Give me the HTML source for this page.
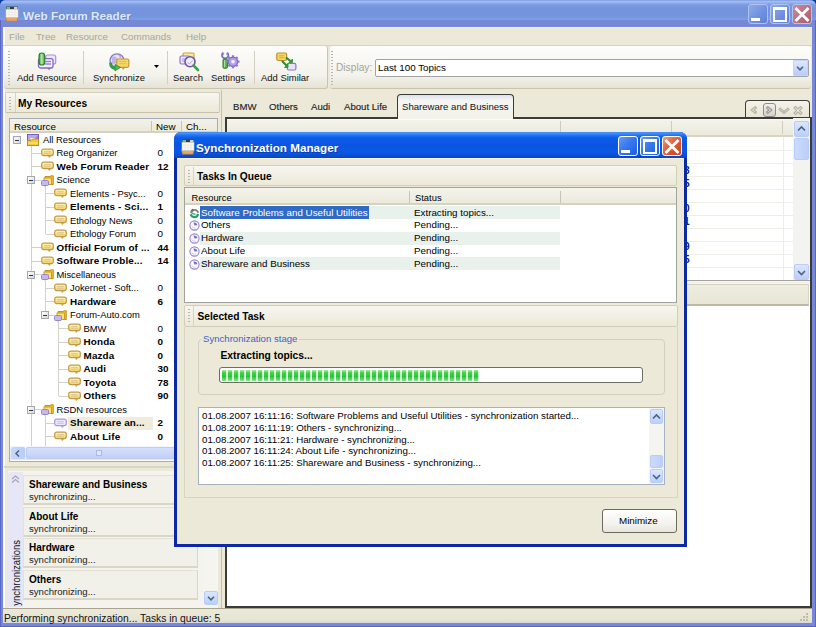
<!DOCTYPE html>
<html><head><meta charset="utf-8"><style>
*{box-sizing:border-box;margin:0;padding:0}
html,body{width:816px;height:627px;overflow:hidden;background:#0B3CA0;font-family:"Liberation Sans",sans-serif;font-size:9.7px;color:#000}
.a{position:absolute}
.t{position:absolute;white-space:nowrap;line-height:12px}
.b{font-weight:bold}
svg{position:absolute;overflow:visible}
</style></head><body>
<div class="a" style="left:0px;top:0px;width:816px;height:627px;background:#7A96DF;border-radius:6px 6px 0 0"></div>
<div class="a" style="left:0px;top:0px;width:816px;height:27px;border-radius:6px 6px 0 0;background:linear-gradient(#7090DA 0,#A2BCF4 1px,#9AB4F0 2.5px,#7E9CE2 4.5px,#7594DE 8px,#7594DE 16px,#7AA0E6 20px,#7AA0E6 24px,#6888D4 26px,#6484D0 27px)"></div>
<div class="a" style="left:0px;top:20px;width:816px;height:607px;background:#7688D6;border:1.5px solid #5A66C6;border-top:none"></div>
<div class="a" style="left:3px;top:27px;width:809px;height:596px;background:#ECE9D8"></div>
<div class="a" style="left:3px;top:28px;width:2px;height:595px;background:#FAFBF8"></div>
<svg style="left:5px;top:6px" width="14" height="16" viewBox="0 0 14 16"><path d="M0.5 11H13L12 15.2H1.5Z" fill="#E4A868" stroke="#B87838" stroke-width="0.7"/><rect x="1" y="2.8" width="12" height="8.6" fill="#FAFAF6" stroke="#D0C8C0" stroke-width="0.6"/><path d="M4 3.5V11M7 3.5V11M10 3.5V11M1.5 6.2H12.5M1.5 8.8H12.5" stroke="#E4E0DC" stroke-width="0.6"/><path d="M1 0.6H13V3.2H1Z" fill="#30403C"/><path d="M1.5 1H5V3H1.5Z" fill="#6CB898"/><path d="M9 1H12.5V3H9Z" fill="#D8D4BC"/></svg>
<div class="t b" style="left:23px;top:9.5px;font-size:11.8px;color:#DDE7FA;text-shadow:1px 1px 0 #6A84C8">Web Forum Reader</div>
<div class="a" style="left:748px;top:4px;width:20px;height:20px;border:1px solid #AFC3F2;border-radius:3px;background:linear-gradient(135deg,#8EAAEA 0%,#6E8FE0 60%,#5F80D8 100%)">
<div class="a" style="left:2px;top:13px;width:9px;height:3px;background:#fff"></div>
</div>
<div class="a" style="left:770px;top:4px;width:20px;height:20px;border:1px solid #AFC3F2;border-radius:3px;background:linear-gradient(135deg,#8EAAEA 0%,#6E8FE0 60%,#5F80D8 100%)">
<div class="a" style="left:2px;top:2px;width:14px;height:15px;border:2px solid #fff;border-top-width:3px"></div>
</div>
<div class="a" style="left:792px;top:4px;width:20px;height:20px;border:1px solid #AFC3F2;border-radius:3px;background:linear-gradient(135deg,#C9899A 0%,#B86E80 60%,#A85E72 100%)">
<svg style="left:0;top:0" width="18" height="18"><path d="M2.5 3L15.5 16M15.5 3L2.5 16" stroke="#fff" stroke-width="2.8"/></svg>
</div>
<div class="t " style="left:9px;top:31px;color:#A8A69A;font-size:9.8px">File</div>
<div class="t " style="left:36px;top:31px;color:#A8A69A;font-size:9.8px">Tree</div>
<div class="t " style="left:66px;top:31px;color:#A8A69A;font-size:9.8px">Resource</div>
<div class="t " style="left:121px;top:31px;color:#A8A69A;font-size:9.8px">Commands</div>
<div class="t " style="left:186px;top:31px;color:#A8A69A;font-size:9.8px">Help</div>
<div class="a" style="left:3px;top:27px;width:809px;height:1px;background:#F4F2EA"></div>
<div class="a" style="left:3px;top:45px;width:809px;height:1px;background:#D8D4C0"></div>
<div class="a" style="left:4px;top:46px;width:324px;height:43px;background:linear-gradient(#FDFDFB,#F3F2EC 70%,#E6E3D4);border-radius:3px;border-bottom:1px solid #C8C4B0;border-right:1px solid #C8C4B0"></div>
<div class="a" style="left:330px;top:46px;width:481px;height:43px;background:linear-gradient(#FDFDFB,#F3F2EC 70%,#E6E3D4);border-radius:3px;border-bottom:1px solid #C8C4B0"></div>
<div class="a" style="left:8px;top:51px;width:2px;height:34px;background:repeating-linear-gradient(#B8B6AC 0 1px,transparent 1px 3px)"></div>
<div class="a" style="left:331px;top:51px;width:2px;height:34px;background:repeating-linear-gradient(#B8B6AC 0 1px,transparent 1px 3px)"></div>
<div class="a" style="left:83px;top:51px;width:1px;height:33px;background:#D4D0C0"></div>
<div class="a" style="left:167px;top:51px;width:1px;height:33px;background:#D4D0C0"></div>
<div class="a" style="left:254px;top:51px;width:1px;height:33px;background:#D4D0C0"></div>
<div class="t " style="left:17px;top:72px;font-size:9.45px;color:#111">Add Resource</div>
<div class="t " style="left:93px;top:72px;font-size:9.45px;color:#111">Synchronize</div>
<div class="t " style="left:173px;top:72px;font-size:9.45px;color:#111">Search</div>
<div class="t " style="left:211px;top:72px;font-size:9.45px;color:#111">Settings</div>
<div class="t " style="left:261px;top:72px;font-size:9.45px;color:#111">Add Similar</div>
<svg style="left:154px;top:65px" width="6" height="4"><path d="M0 0H5L2.5 3Z" fill="#000"/></svg>
<div class="t " style="left:336px;top:62px;color:#A6A498;font-size:10.2px">Display:</div>
<div class="a" style="left:375px;top:59px;width:434px;height:18px;background:#fff;border:1px solid #A2A4A2;border-radius:2px"></div>
<div class="t " style="left:378px;top:62px;font-size:9.8px">Last 100 Topics</div>
<div class="a" style="left:793px;top:60px;width:15px;height:16px;background:linear-gradient(#DDE8FE,#B9CDFA);border:1px solid #C4D4F6;border-radius:1px"></div>
<svg style="left:795.5px;top:66px" width="8" height="5"><path d="M1 0.8L4 3.8L7 0.8" stroke="#4D6185" stroke-width="1.6" fill="none"/></svg>
<svg style="left:36px;top:50px" width="22" height="22" viewBox="0 0 22 22"><defs><linearGradient id="gp" x1="0" y1="0" x2="1" y2="0"><stop offset="0" stop-color="#3C9840"/><stop offset="0.45" stop-color="#B4E8A4"/><stop offset="1" stop-color="#48A848"/></linearGradient></defs><rect x="9.7" y="5" width="10" height="9" rx="2" fill="#ECE6FA" stroke="#A894D8" stroke-width="1.2"/><path d="M11.5 17.5L13 20.5L14.8 17.5Z" fill="#8468C0"/><rect x="2.5" y="8.7" width="14.5" height="9.3" rx="2" fill="#F6F2FE" stroke="#8468C0" stroke-width="1.3"/><path d="M9 11.5H15M9 14H15" stroke="#9A80D8" stroke-width="1.4"/><rect x="3" y="3" width="5.7" height="12" rx="2.8" fill="url(#gp)" stroke="#2C7A30" stroke-width="1.1"/></svg><svg style="left:106px;top:50px" width="24" height="22" viewBox="0 0 24 22"><circle cx="11" cy="10.7" r="6.9" fill="#E8E4F8" stroke="#8878C0" stroke-width="1.3"/><path d="M6 7Q9 5 11 8Q13 10 10 13Q8 15 6 13Z" fill="#C0B4E8"/><path d="M12.5 5Q15 6 14 8" stroke="#B0A0E0" stroke-width="1.2" fill="none"/><path d="M19 17.5L17 20L16 17.5Z" fill="#C09838"/><rect x="10.8" y="9" width="12" height="8.3" rx="1.5" fill="#F8D868" stroke="#C09838" stroke-width="1.2"/><path d="M13 11.5H20.5M13 13.7H20.5" stroke="#E8B840" stroke-width="1"/><path d="M4.6 12.5Q4.5 18.5 10 18.5" stroke="#30A040" stroke-width="3" fill="none"/><path d="M9 14.5L14.5 17.5L9 20.8Z" fill="#48C050" stroke="#208830" stroke-width="0.8"/></svg><svg style="left:177px;top:50px" width="24" height="22" viewBox="0 0 24 22"><rect x="6" y="3" width="11" height="7" rx="1" fill="#FCE8A0" stroke="#D0A030" stroke-width="1.1"/><rect x="3" y="6" width="10" height="8" rx="1.5" fill="#ECE6FA" stroke="#9078C8" stroke-width="1.2"/><path d="M5 9H9M5 11H8" stroke="#A894D8" stroke-width="1"/><circle cx="13" cy="11.7" r="5" fill="#F0ECFC" stroke="#6858A8" stroke-width="1.6"/><path d="M10.5 12.5L12.5 14L15.5 10.5" stroke="#B8A8E0" stroke-width="1" fill="none"/><path d="M16.5 15.5L21 20" stroke="#40A048" stroke-width="2.6" stroke-linecap="round"/></svg><svg style="left:219px;top:50px" width="22" height="22" viewBox="0 0 22 22"><path d="M4.2 2.8A3.2 3.2 0 1 0 8.2 2.8" stroke="#7A70B4" stroke-width="1.8" fill="none"/><path d="M4.6 2.5V5.2M7.8 2.5V5.2" stroke="#9C94CC" stroke-width="1"/><rect x="4" y="9.2" width="4.4" height="9" rx="0.8" fill="#58B848" stroke="#2C7A30" stroke-width="1"/><path d="M5.6 10.2V17.2" stroke="#B0E8A0" stroke-width="1"/><circle cx="14" cy="11.7" r="4.6" fill="#B4A0E8" stroke="#7A60C0" stroke-width="1.2"/><g stroke="#9078D0" stroke-width="2.2"><path d="M14 5.2V7.2M14 16.2V18.2M7.5 11.7H9.5M18.5 11.7H20.5M9.4 7.1L10.8 8.5M17.2 14.9L18.6 16.3M9.4 16.3L10.8 14.9M17.2 8.5L18.6 7.1"/></g><circle cx="14" cy="11.7" r="1.8" fill="#F4F0FF"/></svg><svg style="left:275px;top:50px" width="24" height="22" viewBox="0 0 24 22"><rect x="1.8" y="3" width="9.8" height="7.5" rx="1.5" fill="#F8D860" stroke="#B89030" stroke-width="1.2"/><path d="M4 5.8H9.5M4 7.8H9.5" stroke="#D0A848" stroke-width="1"/><rect x="12.3" y="13.4" width="8.6" height="6.6" rx="1.5" fill="#E8E2FA" stroke="#8C78C8" stroke-width="1.2"/><path d="M7 11L11.5 15.5M11 7.5L15.5 11" stroke="#2C8A30" stroke-width="2"/><path d="M9.5 17.5L13 17.5L13 13.5Z M14 12.5L17.5 12.5L17.5 9Z" fill="#30A038" stroke="#2C8A30" stroke-width="0.8"/></svg>
<div class="a" style="left:5px;top:92px;width:215px;height:21px;background:linear-gradient(#F7F6F0,#ECE9D8);border:1px solid #D2CEBC;border-bottom-color:#C4C0AC;border-radius:2px"></div>
<div class="a" style="left:9px;top:97px;width:2px;height:13px;background:repeating-linear-gradient(#B8B6AC 0 1px,transparent 1px 3px)"></div>
<div class="a" style="left:15px;top:93px;width:1px;height:19px;background:#D8D4C4"></div>
<div class="t b" style="left:18px;top:97.5px;font-size:10.2px">My Resources</div>
<div class="a" style="left:221px;top:90px;width:1px;height:518px;background:#C4C0AC"></div>
<div class="a" style="left:9px;top:118px;width:209px;height:344px;background:#fff;border:1px solid #A5ACB5"></div>
<div class="a" style="left:10px;top:119px;width:207px;height:14px;background:linear-gradient(#F3F2EA,#EBEADB);border-bottom:2px solid #D6D2C2"></div>
<div class="a" style="left:151px;top:121px;width:1px;height:10px;background:#C8C4B4"></div>
<div class="a" style="left:181px;top:121px;width:1px;height:10px;background:#C8C4B4"></div>
<div class="t " style="left:14px;top:121px;font-size:9.8px">Resource</div>
<div class="t " style="left:156px;top:121px;font-size:9.8px">New</div>
<div class="t " style="left:186px;top:121px;font-size:9.8px">Ch...</div>
<div class="a" style="left:31px;top:145.7px;width:1px;height:300.3px;background:#D2D2CA"></div>
<div class="a" style="left:45px;top:186.2px;width:1px;height:48.0px;background:#D2D2CA"></div>
<div class="a" style="left:45px;top:280.7px;width:1px;height:34.5px;background:#D2D2CA"></div>
<div class="a" style="left:58px;top:321.2px;width:1px;height:75.0px;background:#D2D2CA"></div>
<div class="a" style="left:45px;top:415.7px;width:1px;height:30.30000000000001px;background:#D2D2CA"></div>
<div class="a" style="left:13px;top:136px;width:8px;height:8px;border:1px solid #A0A8B4;background:linear-gradient(135deg,#fff,#D8D8D0);"><div class="a" style="left:1px;top:2.5px;width:4px;height:1.3px;background:#303848"></div></div>
<svg style="left:27.0px;top:134.2px" width="12" height="12" viewBox="0 0 12 12"><rect x="0.5" y="0.5" width="11" height="11" fill="#9C88D8" stroke="#7860B8" stroke-width="1"/><path d="M1 1H11L6 6L1 11Z" fill="#B8A8EC"/><path d="M3 4H8V7L5 7Z" fill="#F4F0FF"/><path d="M0.5 6.5H4L5.5 5H11.5V11.5H0.5Z" fill="#F6C838" stroke="#C09010" stroke-width="0.9"/><path d="M1 9H11" stroke="#FFE890" stroke-width="1"/></svg>
<div class="t " style="left:43.0px;top:133.7px;font-size:9.4px">All Resources</div>
<div class="a" style="left:32px;top:153px;width:9px;height:1px;background:#D2D2CA"></div>
<svg style="left:40.6px;top:147.7px" width="13" height="11" viewBox="0 0 13 11"><defs><linearGradient id="gy" x1="0" y1="0" x2="0" y2="1"><stop offset="0" stop-color="#FFF6C0"/><stop offset="1" stop-color="#F4D060"/></linearGradient></defs><path d="M7 7.2L8.3 9.6L10 7.2Z" fill="#E0B040" stroke="#B88C30" stroke-width="0.6"/><rect x="0.7" y="1.2" width="11.6" height="6.4" rx="2" fill="url(#gy)" stroke="#C09A48" stroke-width="1.2"/><path d="M3.2 3.6H9.8M3.2 5.3H9.8" stroke="#D8C48C" stroke-width="0.9"/></svg>
<div class="t " style="left:56.5px;top:147.2px;font-size:9.4px">Reg Organizer</div>
<div class="t " style="left:157.5px;top:147.2px;font-size:9.9px">0</div>
<div class="a" style="left:32px;top:166px;width:9px;height:1px;background:#D2D2CA"></div>
<svg style="left:40.6px;top:161.2px" width="13" height="11" viewBox="0 0 13 11"><defs><linearGradient id="gy" x1="0" y1="0" x2="0" y2="1"><stop offset="0" stop-color="#FFF6C0"/><stop offset="1" stop-color="#F4D060"/></linearGradient></defs><path d="M7 7.2L8.3 9.6L10 7.2Z" fill="#E0B040" stroke="#B88C30" stroke-width="0.6"/><rect x="0.7" y="1.2" width="11.6" height="6.4" rx="2" fill="url(#gy)" stroke="#C09A48" stroke-width="1.2"/><path d="M3.2 3.6H9.8M3.2 5.3H9.8" stroke="#D8C48C" stroke-width="0.9"/></svg>
<div class="t b" style="left:56.5px;top:160.7px;font-size:9.9px;letter-spacing:0.15px">Web Forum Reader</div>
<div class="t b" style="left:157.5px;top:160.7px;font-size:9.9px">12</div>
<div class="a" style="left:32px;top:180px;width:9px;height:1px;background:#D2D2CA"></div>
<div class="a" style="left:27px;top:176px;width:8px;height:8px;border:1px solid #A0A8B4;background:linear-gradient(135deg,#fff,#D8D8D0);"><div class="a" style="left:1px;top:2.5px;width:4px;height:1.3px;background:#303848"></div></div>
<svg style="left:40.6px;top:174.7px" width="13" height="12" viewBox="0 0 13 12"><path d="M4 1.5H9L10 0.8H12.3V9.5H4Z" fill="#F0C030" stroke="#C08A10" stroke-width="0.9"/><rect x="3" y="3" width="7.5" height="6.5" fill="#FCE078" stroke="#C89820" stroke-width="0.9"/><rect x="0.5" y="5.5" width="7" height="5" rx="1" fill="#C4B8EC" stroke="#9080C0" stroke-width="0.9"/><path d="M3 10.5L4 11.8L5 10.5" fill="#9080C0"/></svg>
<div class="t " style="left:56.5px;top:174.2px;font-size:9.4px">Science</div>
<div class="a" style="left:46px;top:193px;width:8px;height:1px;background:#D2D2CA"></div>
<svg style="left:54.2px;top:188.2px" width="13" height="11" viewBox="0 0 13 11"><defs><linearGradient id="gy" x1="0" y1="0" x2="0" y2="1"><stop offset="0" stop-color="#FFF6C0"/><stop offset="1" stop-color="#F4D060"/></linearGradient></defs><path d="M7 7.2L8.3 9.6L10 7.2Z" fill="#E0B040" stroke="#B88C30" stroke-width="0.6"/><rect x="0.7" y="1.2" width="11.6" height="6.4" rx="2" fill="url(#gy)" stroke="#C09A48" stroke-width="1.2"/><path d="M3.2 3.6H9.8M3.2 5.3H9.8" stroke="#D8C48C" stroke-width="0.9"/></svg>
<div class="t " style="left:70.0px;top:187.7px;font-size:9.4px">Elements - Psyc...</div>
<div class="t " style="left:157.5px;top:187.7px;font-size:9.9px">0</div>
<div class="a" style="left:46px;top:207px;width:8px;height:1px;background:#D2D2CA"></div>
<svg style="left:54.2px;top:201.7px" width="13" height="11" viewBox="0 0 13 11"><defs><linearGradient id="gy" x1="0" y1="0" x2="0" y2="1"><stop offset="0" stop-color="#FFF6C0"/><stop offset="1" stop-color="#F4D060"/></linearGradient></defs><path d="M7 7.2L8.3 9.6L10 7.2Z" fill="#E0B040" stroke="#B88C30" stroke-width="0.6"/><rect x="0.7" y="1.2" width="11.6" height="6.4" rx="2" fill="url(#gy)" stroke="#C09A48" stroke-width="1.2"/><path d="M3.2 3.6H9.8M3.2 5.3H9.8" stroke="#D8C48C" stroke-width="0.9"/></svg>
<div class="t b" style="left:70.0px;top:201.2px;font-size:9.9px;letter-spacing:0.15px">Elements - Sci...</div>
<div class="t b" style="left:157.5px;top:201.2px;font-size:9.9px">1</div>
<div class="a" style="left:46px;top:220px;width:8px;height:1px;background:#D2D2CA"></div>
<svg style="left:54.2px;top:215.2px" width="13" height="11" viewBox="0 0 13 11"><defs><linearGradient id="gy" x1="0" y1="0" x2="0" y2="1"><stop offset="0" stop-color="#FFF6C0"/><stop offset="1" stop-color="#F4D060"/></linearGradient></defs><path d="M7 7.2L8.3 9.6L10 7.2Z" fill="#E0B040" stroke="#B88C30" stroke-width="0.6"/><rect x="0.7" y="1.2" width="11.6" height="6.4" rx="2" fill="url(#gy)" stroke="#C09A48" stroke-width="1.2"/><path d="M3.2 3.6H9.8M3.2 5.3H9.8" stroke="#D8C48C" stroke-width="0.9"/></svg>
<div class="t " style="left:70.0px;top:214.7px;font-size:9.4px">Ethology News</div>
<div class="t " style="left:157.5px;top:214.7px;font-size:9.9px">0</div>
<div class="a" style="left:46px;top:234px;width:8px;height:1px;background:#D2D2CA"></div>
<svg style="left:54.2px;top:228.7px" width="13" height="11" viewBox="0 0 13 11"><defs><linearGradient id="gy" x1="0" y1="0" x2="0" y2="1"><stop offset="0" stop-color="#FFF6C0"/><stop offset="1" stop-color="#F4D060"/></linearGradient></defs><path d="M7 7.2L8.3 9.6L10 7.2Z" fill="#E0B040" stroke="#B88C30" stroke-width="0.6"/><rect x="0.7" y="1.2" width="11.6" height="6.4" rx="2" fill="url(#gy)" stroke="#C09A48" stroke-width="1.2"/><path d="M3.2 3.6H9.8M3.2 5.3H9.8" stroke="#D8C48C" stroke-width="0.9"/></svg>
<div class="t " style="left:70.0px;top:228.2px;font-size:9.4px">Ethology Forum</div>
<div class="t " style="left:157.5px;top:228.2px;font-size:9.9px">0</div>
<div class="a" style="left:32px;top:247px;width:9px;height:1px;background:#D2D2CA"></div>
<svg style="left:40.6px;top:242.2px" width="13" height="11" viewBox="0 0 13 11"><defs><linearGradient id="gy" x1="0" y1="0" x2="0" y2="1"><stop offset="0" stop-color="#FFF6C0"/><stop offset="1" stop-color="#F4D060"/></linearGradient></defs><path d="M7 7.2L8.3 9.6L10 7.2Z" fill="#E0B040" stroke="#B88C30" stroke-width="0.6"/><rect x="0.7" y="1.2" width="11.6" height="6.4" rx="2" fill="url(#gy)" stroke="#C09A48" stroke-width="1.2"/><path d="M3.2 3.6H9.8M3.2 5.3H9.8" stroke="#D8C48C" stroke-width="0.9"/></svg>
<div class="t b" style="left:56.5px;top:241.7px;font-size:9.9px;letter-spacing:0.15px">Official Forum of ...</div>
<div class="t b" style="left:157.5px;top:241.7px;font-size:9.9px">44</div>
<div class="a" style="left:32px;top:261px;width:9px;height:1px;background:#D2D2CA"></div>
<svg style="left:40.6px;top:255.7px" width="13" height="11" viewBox="0 0 13 11"><defs><linearGradient id="gy" x1="0" y1="0" x2="0" y2="1"><stop offset="0" stop-color="#FFF6C0"/><stop offset="1" stop-color="#F4D060"/></linearGradient></defs><path d="M7 7.2L8.3 9.6L10 7.2Z" fill="#E0B040" stroke="#B88C30" stroke-width="0.6"/><rect x="0.7" y="1.2" width="11.6" height="6.4" rx="2" fill="url(#gy)" stroke="#C09A48" stroke-width="1.2"/><path d="M3.2 3.6H9.8M3.2 5.3H9.8" stroke="#D8C48C" stroke-width="0.9"/></svg>
<div class="t b" style="left:56.5px;top:255.2px;font-size:9.9px;letter-spacing:0.15px">Software Proble...</div>
<div class="t b" style="left:157.5px;top:255.2px;font-size:9.9px">14</div>
<div class="a" style="left:32px;top:274px;width:9px;height:1px;background:#D2D2CA"></div>
<div class="a" style="left:27px;top:271px;width:8px;height:8px;border:1px solid #A0A8B4;background:linear-gradient(135deg,#fff,#D8D8D0);"><div class="a" style="left:1px;top:2.5px;width:4px;height:1.3px;background:#303848"></div></div>
<svg style="left:40.6px;top:269.2px" width="13" height="12" viewBox="0 0 13 12"><path d="M4 1.5H9L10 0.8H12.3V9.5H4Z" fill="#F0C030" stroke="#C08A10" stroke-width="0.9"/><rect x="3" y="3" width="7.5" height="6.5" fill="#FCE078" stroke="#C89820" stroke-width="0.9"/><rect x="0.5" y="5.5" width="7" height="5" rx="1" fill="#C4B8EC" stroke="#9080C0" stroke-width="0.9"/><path d="M3 10.5L4 11.8L5 10.5" fill="#9080C0"/></svg>
<div class="t " style="left:56.5px;top:268.7px;font-size:9.4px">Miscellaneous</div>
<div class="a" style="left:46px;top:288px;width:8px;height:1px;background:#D2D2CA"></div>
<svg style="left:54.2px;top:282.7px" width="13" height="11" viewBox="0 0 13 11"><defs><linearGradient id="gy" x1="0" y1="0" x2="0" y2="1"><stop offset="0" stop-color="#FFF6C0"/><stop offset="1" stop-color="#F4D060"/></linearGradient></defs><path d="M7 7.2L8.3 9.6L10 7.2Z" fill="#E0B040" stroke="#B88C30" stroke-width="0.6"/><rect x="0.7" y="1.2" width="11.6" height="6.4" rx="2" fill="url(#gy)" stroke="#C09A48" stroke-width="1.2"/><path d="M3.2 3.6H9.8M3.2 5.3H9.8" stroke="#D8C48C" stroke-width="0.9"/></svg>
<div class="t " style="left:70.0px;top:282.2px;font-size:9.4px">Jokernet - Soft...</div>
<div class="t " style="left:157.5px;top:282.2px;font-size:9.9px">0</div>
<div class="a" style="left:46px;top:301px;width:8px;height:1px;background:#D2D2CA"></div>
<svg style="left:54.2px;top:296.2px" width="13" height="11" viewBox="0 0 13 11"><defs><linearGradient id="gy" x1="0" y1="0" x2="0" y2="1"><stop offset="0" stop-color="#FFF6C0"/><stop offset="1" stop-color="#F4D060"/></linearGradient></defs><path d="M7 7.2L8.3 9.6L10 7.2Z" fill="#E0B040" stroke="#B88C30" stroke-width="0.6"/><rect x="0.7" y="1.2" width="11.6" height="6.4" rx="2" fill="url(#gy)" stroke="#C09A48" stroke-width="1.2"/><path d="M3.2 3.6H9.8M3.2 5.3H9.8" stroke="#D8C48C" stroke-width="0.9"/></svg>
<div class="t b" style="left:70.0px;top:295.7px;font-size:9.9px;letter-spacing:0.15px">Hardware</div>
<div class="t b" style="left:157.5px;top:295.7px;font-size:9.9px">6</div>
<div class="a" style="left:46px;top:315px;width:8px;height:1px;background:#D2D2CA"></div>
<div class="a" style="left:41px;top:311px;width:8px;height:8px;border:1px solid #A0A8B4;background:linear-gradient(135deg,#fff,#D8D8D0);"><div class="a" style="left:1px;top:2.5px;width:4px;height:1.3px;background:#303848"></div></div>
<svg style="left:54.2px;top:309.7px" width="13" height="12" viewBox="0 0 13 12"><path d="M4 1.5H9L10 0.8H12.3V9.5H4Z" fill="#F0C030" stroke="#C08A10" stroke-width="0.9"/><rect x="3" y="3" width="7.5" height="6.5" fill="#FCE078" stroke="#C89820" stroke-width="0.9"/><rect x="0.5" y="5.5" width="7" height="5" rx="1" fill="#C4B8EC" stroke="#9080C0" stroke-width="0.9"/><path d="M3 10.5L4 11.8L5 10.5" fill="#9080C0"/></svg>
<div class="t " style="left:70.0px;top:309.2px;font-size:9.4px">Forum-Auto.com</div>
<div class="a" style="left:59px;top:328px;width:9px;height:1px;background:#D2D2CA"></div>
<svg style="left:67.8px;top:323.2px" width="13" height="11" viewBox="0 0 13 11"><defs><linearGradient id="gy" x1="0" y1="0" x2="0" y2="1"><stop offset="0" stop-color="#FFF6C0"/><stop offset="1" stop-color="#F4D060"/></linearGradient></defs><path d="M7 7.2L8.3 9.6L10 7.2Z" fill="#E0B040" stroke="#B88C30" stroke-width="0.6"/><rect x="0.7" y="1.2" width="11.6" height="6.4" rx="2" fill="url(#gy)" stroke="#C09A48" stroke-width="1.2"/><path d="M3.2 3.6H9.8M3.2 5.3H9.8" stroke="#D8C48C" stroke-width="0.9"/></svg>
<div class="t " style="left:83.5px;top:322.7px;font-size:9.4px">BMW</div>
<div class="t " style="left:157.5px;top:322.7px;font-size:9.9px">0</div>
<div class="a" style="left:59px;top:342px;width:9px;height:1px;background:#D2D2CA"></div>
<svg style="left:67.8px;top:336.7px" width="13" height="11" viewBox="0 0 13 11"><defs><linearGradient id="gy" x1="0" y1="0" x2="0" y2="1"><stop offset="0" stop-color="#FFF6C0"/><stop offset="1" stop-color="#F4D060"/></linearGradient></defs><path d="M7 7.2L8.3 9.6L10 7.2Z" fill="#E0B040" stroke="#B88C30" stroke-width="0.6"/><rect x="0.7" y="1.2" width="11.6" height="6.4" rx="2" fill="url(#gy)" stroke="#C09A48" stroke-width="1.2"/><path d="M3.2 3.6H9.8M3.2 5.3H9.8" stroke="#D8C48C" stroke-width="0.9"/></svg>
<div class="t b" style="left:83.5px;top:336.2px;font-size:9.9px;letter-spacing:0.15px">Honda</div>
<div class="t b" style="left:157.5px;top:336.2px;font-size:9.9px">0</div>
<div class="a" style="left:59px;top:355px;width:9px;height:1px;background:#D2D2CA"></div>
<svg style="left:67.8px;top:350.2px" width="13" height="11" viewBox="0 0 13 11"><defs><linearGradient id="gy" x1="0" y1="0" x2="0" y2="1"><stop offset="0" stop-color="#FFF6C0"/><stop offset="1" stop-color="#F4D060"/></linearGradient></defs><path d="M7 7.2L8.3 9.6L10 7.2Z" fill="#E0B040" stroke="#B88C30" stroke-width="0.6"/><rect x="0.7" y="1.2" width="11.6" height="6.4" rx="2" fill="url(#gy)" stroke="#C09A48" stroke-width="1.2"/><path d="M3.2 3.6H9.8M3.2 5.3H9.8" stroke="#D8C48C" stroke-width="0.9"/></svg>
<div class="t b" style="left:83.5px;top:349.7px;font-size:9.9px;letter-spacing:0.15px">Mazda</div>
<div class="t b" style="left:157.5px;top:349.7px;font-size:9.9px">0</div>
<div class="a" style="left:59px;top:369px;width:9px;height:1px;background:#D2D2CA"></div>
<svg style="left:67.8px;top:363.7px" width="13" height="11" viewBox="0 0 13 11"><defs><linearGradient id="gy" x1="0" y1="0" x2="0" y2="1"><stop offset="0" stop-color="#FFF6C0"/><stop offset="1" stop-color="#F4D060"/></linearGradient></defs><path d="M7 7.2L8.3 9.6L10 7.2Z" fill="#E0B040" stroke="#B88C30" stroke-width="0.6"/><rect x="0.7" y="1.2" width="11.6" height="6.4" rx="2" fill="url(#gy)" stroke="#C09A48" stroke-width="1.2"/><path d="M3.2 3.6H9.8M3.2 5.3H9.8" stroke="#D8C48C" stroke-width="0.9"/></svg>
<div class="t b" style="left:83.5px;top:363.2px;font-size:9.9px;letter-spacing:0.15px">Audi</div>
<div class="t b" style="left:157.5px;top:363.2px;font-size:9.9px">30</div>
<div class="a" style="left:59px;top:382px;width:9px;height:1px;background:#D2D2CA"></div>
<svg style="left:67.8px;top:377.2px" width="13" height="11" viewBox="0 0 13 11"><defs><linearGradient id="gy" x1="0" y1="0" x2="0" y2="1"><stop offset="0" stop-color="#FFF6C0"/><stop offset="1" stop-color="#F4D060"/></linearGradient></defs><path d="M7 7.2L8.3 9.6L10 7.2Z" fill="#E0B040" stroke="#B88C30" stroke-width="0.6"/><rect x="0.7" y="1.2" width="11.6" height="6.4" rx="2" fill="url(#gy)" stroke="#C09A48" stroke-width="1.2"/><path d="M3.2 3.6H9.8M3.2 5.3H9.8" stroke="#D8C48C" stroke-width="0.9"/></svg>
<div class="t b" style="left:83.5px;top:376.7px;font-size:9.9px;letter-spacing:0.15px">Toyota</div>
<div class="t b" style="left:157.5px;top:376.7px;font-size:9.9px">78</div>
<div class="a" style="left:59px;top:396px;width:9px;height:1px;background:#D2D2CA"></div>
<svg style="left:67.8px;top:390.7px" width="13" height="11" viewBox="0 0 13 11"><defs><linearGradient id="gy" x1="0" y1="0" x2="0" y2="1"><stop offset="0" stop-color="#FFF6C0"/><stop offset="1" stop-color="#F4D060"/></linearGradient></defs><path d="M7 7.2L8.3 9.6L10 7.2Z" fill="#E0B040" stroke="#B88C30" stroke-width="0.6"/><rect x="0.7" y="1.2" width="11.6" height="6.4" rx="2" fill="url(#gy)" stroke="#C09A48" stroke-width="1.2"/><path d="M3.2 3.6H9.8M3.2 5.3H9.8" stroke="#D8C48C" stroke-width="0.9"/></svg>
<div class="t b" style="left:83.5px;top:390.2px;font-size:9.9px;letter-spacing:0.15px">Others</div>
<div class="t b" style="left:157.5px;top:390.2px;font-size:9.9px">90</div>
<div class="a" style="left:32px;top:409px;width:9px;height:1px;background:#D2D2CA"></div>
<div class="a" style="left:27px;top:406px;width:8px;height:8px;border:1px solid #A0A8B4;background:linear-gradient(135deg,#fff,#D8D8D0);"><div class="a" style="left:1px;top:2.5px;width:4px;height:1.3px;background:#303848"></div></div>
<svg style="left:40.6px;top:404.2px" width="13" height="12" viewBox="0 0 13 12"><path d="M4 1.5H9L10 0.8H12.3V9.5H4Z" fill="#F0C030" stroke="#C08A10" stroke-width="0.9"/><rect x="3" y="3" width="7.5" height="6.5" fill="#FCE078" stroke="#C89820" stroke-width="0.9"/><rect x="0.5" y="5.5" width="7" height="5" rx="1" fill="#C4B8EC" stroke="#9080C0" stroke-width="0.9"/><path d="M3 10.5L4 11.8L5 10.5" fill="#9080C0"/></svg>
<div class="t " style="left:56.5px;top:403.7px;font-size:9.4px">RSDN resources</div>
<div class="a" style="left:46px;top:423px;width:8px;height:1px;background:#D2D2CA"></div>
<div class="a" style="left:68.0px;top:417px;width:85px;height:13px;background:#EFEBDD"></div>
<svg style="left:54.2px;top:417.7px" width="13" height="11" viewBox="0 0 13 11"><path d="M7 7.2L8.3 9.6L10 7.2Z" fill="#C8B8F0" stroke="#9888C8" stroke-width="0.6"/><rect x="0.7" y="1.2" width="11.6" height="6.4" rx="2" fill="#ECE6FC" stroke="#A898D8" stroke-width="1.2"/><path d="M3.2 3.6H9.8M3.2 5.3H9.8" stroke="#C8BCEC" stroke-width="0.9"/></svg>
<div class="t b" style="left:70.0px;top:417.2px;font-size:9.9px;letter-spacing:0.15px">Shareware an...</div>
<div class="t b" style="left:157.5px;top:417.2px;font-size:9.9px">2</div>
<div class="a" style="left:46px;top:436px;width:8px;height:1px;background:#D2D2CA"></div>
<svg style="left:54.2px;top:431.2px" width="13" height="11" viewBox="0 0 13 11"><defs><linearGradient id="gy" x1="0" y1="0" x2="0" y2="1"><stop offset="0" stop-color="#FFF6C0"/><stop offset="1" stop-color="#F4D060"/></linearGradient></defs><path d="M7 7.2L8.3 9.6L10 7.2Z" fill="#E0B040" stroke="#B88C30" stroke-width="0.6"/><rect x="0.7" y="1.2" width="11.6" height="6.4" rx="2" fill="url(#gy)" stroke="#C09A48" stroke-width="1.2"/><path d="M3.2 3.6H9.8M3.2 5.3H9.8" stroke="#D8C48C" stroke-width="0.9"/></svg>
<div class="t b" style="left:70.0px;top:430.7px;font-size:9.9px;letter-spacing:0.15px">About Life</div>
<div class="t b" style="left:157.5px;top:430.7px;font-size:9.9px">0</div>
<div class="a" style="left:10px;top:446px;width:207px;height:14px;background:linear-gradient(#F4F7FE,#E4ECFC 30%,#DDE6FB)"></div>
<div class="a" style="left:11px;top:447px;width:14px;height:12px;background:linear-gradient(90deg,#C8D8FA,#B8CCF8);border-radius:2px"></div>
<svg style="left:15px;top:450px" width="5" height="7"><path d="M4 0.5L1 3.5L4 6.5" stroke="#4D6185" stroke-width="1.5" fill="none"/></svg>
<div class="a" style="left:26px;top:447px;width:190px;height:12px;background:linear-gradient(#D4E0FC,#C8D6F8 60%,#C0D0F6);border:1px solid #BCCCF2;border-radius:2px"></div>
<div class="a" style="left:96px;top:450px;width:6px;height:6px;border:1px solid #A8BCE8;background:#DCE6FC"></div>
<div class="a" style="left:4px;top:466px;width:214px;height:2px;background:#DAD6C6"></div>
<div class="a" style="left:8px;top:471px;width:210px;height:137px;background:#F4F3EE"></div>
<div class="a" style="left:8px;top:472px;width:15px;height:135px;background:#E6E6F6;border-radius:3px 0 0 0"></div>
<svg style="left:11px;top:475px" width="9" height="8"><path d="M1 4L4.5 1L8 4M1 7.5L4.5 4.5L8 7.5" stroke="#A4A4B4" stroke-width="1.1" fill="none"/></svg>
<div class="a" style="left:8px;top:471px;width:15px;height:135px;overflow:hidden"><div class="t" style="left:-32.5px;top:99px;width:80px;height:12px;transform:rotate(-90deg) scaleX(0.9);transform-origin:50% 50%;font-size:10.5px;color:#111">Synchronizations</div></div>
<div class="a" style="left:23px;top:475px;width:175px;height:30px;background:#F1F0E9;border-top:1px solid #E4E2D6;border-left:1px solid #E4E2D6;border-bottom:2px solid #DAD6C6;border-right:1px solid #DAD6C6"></div>
<div class="t b" style="left:29px;top:478.5px;font-size:10px">Shareware and Business</div>
<div class="t " style="left:29px;top:490.5px;font-size:9.6px;color:#222">synchronizing...</div>
<div class="a" style="left:23px;top:507px;width:175px;height:30px;background:#F1F0E9;border-top:1px solid #E4E2D6;border-left:1px solid #E4E2D6;border-bottom:2px solid #DAD6C6;border-right:1px solid #DAD6C6"></div>
<div class="t b" style="left:29px;top:510.5px;font-size:10px">About Life</div>
<div class="t " style="left:29px;top:522.5px;font-size:9.6px;color:#222">synchronizing...</div>
<div class="a" style="left:23px;top:538px;width:175px;height:30px;background:#F1F0E9;border-top:1px solid #E4E2D6;border-left:1px solid #E4E2D6;border-bottom:2px solid #DAD6C6;border-right:1px solid #DAD6C6"></div>
<div class="t b" style="left:29px;top:541.5px;font-size:10px">Hardware</div>
<div class="t " style="left:29px;top:553.5px;font-size:9.6px;color:#222">synchronizing...</div>
<div class="a" style="left:23px;top:570px;width:175px;height:30px;background:#F1F0E9;border-top:1px solid #E4E2D6;border-left:1px solid #E4E2D6;border-bottom:2px solid #DAD6C6;border-right:1px solid #DAD6C6"></div>
<div class="t b" style="left:29px;top:573.5px;font-size:10px">Others</div>
<div class="t " style="left:29px;top:585.5px;font-size:9.6px;color:#222">synchronizing...</div>
<div class="a" style="left:203px;top:471px;width:15px;height:136px;background:#F5F5F0"></div>
<div class="a" style="left:204px;top:591px;width:14px;height:14px;background:linear-gradient(#DCE7FE,#BBCFF9);border:1px solid #B8CCF8;border-radius:2px"></div>
<svg style="left:207px;top:596px" width="8" height="5"><path d="M1 0.8L4 3.8L7 0.8" stroke="#4D6185" stroke-width="1.6" fill="none"/></svg>
<div class="a" style="left:3px;top:608px;width:809px;height:1px;background:#A8A490"></div>
<div class="a" style="left:3px;top:609px;width:809px;height:14px;background:linear-gradient(#ECE9D8,#E6E4D2 80%,#D8D8DC)"></div>
<div class="t " style="left:4px;top:612.5px;font-size:10.3px;color:#111">Performing synchronization... Tasks in queue: 5</div>
<div class="a" style="left:806px;top:613px;width:2px;height:2px;background:#C0BCA8"></div>
<div class="a" style="left:803px;top:616px;width:2px;height:2px;background:#C0BCA8"></div>
<div class="a" style="left:806px;top:616px;width:2px;height:2px;background:#C0BCA8"></div>
<div class="a" style="left:800px;top:619px;width:2px;height:2px;background:#C0BCA8"></div>
<div class="a" style="left:803px;top:619px;width:2px;height:2px;background:#C0BCA8"></div>
<div class="a" style="left:806px;top:619px;width:2px;height:2px;background:#C0BCA8"></div>
<div class="t " style="left:233px;top:101px;font-size:9.6px;color:#1E1E1E;-webkit-text-stroke:0.15px #1E1E1E">BMW</div>
<div class="t " style="left:269px;top:101px;font-size:9.6px;color:#1E1E1E;-webkit-text-stroke:0.15px #1E1E1E">Others</div>
<div class="t " style="left:311px;top:101px;font-size:9.6px;color:#1E1E1E;-webkit-text-stroke:0.15px #1E1E1E">Audi</div>
<div class="t " style="left:344px;top:101px;font-size:9.6px;color:#1E1E1E;-webkit-text-stroke:0.15px #1E1E1E">About Life</div>
<div class="a" style="left:745px;top:100px;width:65px;height:18px;background:linear-gradient(#F4F2EA,#E8E5D4);border:1px solid #3F3E38;border-bottom:none;border-radius:4px 4px 0 0"></div>
<div class="a" style="left:763px;top:103px;width:13px;height:14px;background:linear-gradient(#F0F0EE,#D4D2CC);border:1px solid #8E8C86;border-radius:3px"></div>
<svg style="left:746.5px;top:104px" width="60" height="12" viewBox="0 0 60 12"><g stroke="#B4B2A4" stroke-width="1.1" fill="none" stroke-linejoin="round"><path d="M8.5 2.5L4 6L8.5 9.5L9.5 8L7 6L9.5 4Z"/><path d="M20.5 2.5L25 6L20.5 9.5L19.5 8L22 6L19.5 4Z" stroke="#9C9A90"/><path d="M33 4L37 7.5L41 4L42 5.5L37 9.5L32 5.5Z"/><path d="M48.5 2.5L51 5L53.5 2.5L55 4L52.5 6.5L55 9L53.5 10.5L51 8L48.5 10.5L47 9L49.5 6.5L47 4Z"/></g></svg>
<div class="a" style="left:225px;top:117px;width:587px;height:491px;background:#fff;border:2px solid #3A3A36"></div>
<div class="a" style="left:227px;top:119px;width:566px;height:18px;background:linear-gradient(#F4F3EC,#EBEADB);border-top:1px solid #FAFAF6;border-bottom:2px solid #D8D4C4"></div>
<div class="a" style="left:397px;top:94px;width:117px;height:25px;background:linear-gradient(#DCE2F0,#F6F6F2 25%,#F2F1EA 90%,#F4F3EC);border:1.5px solid #3A3A38;border-bottom:none;border-radius:4px 4px 0 0"></div>
<div class="t " style="left:402px;top:101px;font-size:9.6px;color:#111">Shareware and Business</div>
<div class="a" style="left:560px;top:121px;width:1px;height:13px;background:#D0CCBC"></div>
<div class="a" style="left:671px;top:121px;width:1px;height:13px;background:#D0CCBC"></div>
<div class="a" style="left:782px;top:121px;width:1px;height:13px;background:#D0CCBC"></div>
<div class="a" style="left:227px;top:150px;width:566px;height:1px;background:#EEEEE8"></div>
<div class="a" style="left:227px;top:163px;width:566px;height:1px;background:#EEEEE8"></div>
<div class="a" style="left:227px;top:176px;width:566px;height:1px;background:#EEEEE8"></div>
<div class="a" style="left:227px;top:189px;width:566px;height:1px;background:#EEEEE8"></div>
<div class="a" style="left:227px;top:202px;width:566px;height:1px;background:#EEEEE8"></div>
<div class="a" style="left:227px;top:215px;width:566px;height:1px;background:#EEEEE8"></div>
<div class="a" style="left:227px;top:228px;width:566px;height:1px;background:#EEEEE8"></div>
<div class="a" style="left:227px;top:241px;width:566px;height:1px;background:#EEEEE8"></div>
<div class="a" style="left:227px;top:254px;width:566px;height:1px;background:#EEEEE8"></div>
<div class="a" style="left:227px;top:267px;width:566px;height:1px;background:#EEEEE8"></div>
<div class="a" style="left:227px;top:280px;width:566px;height:1px;background:#EEEEE8"></div>
<div class="a" style="left:783px;top:137px;width:1px;height:144px;background:#EEEEE8"></div>
<div class="t b" style="left:684px;top:164.5px;font-size:10.2px;color:#14207A">3</div>
<div class="t b" style="left:684px;top:177.5px;font-size:10.2px;color:#14207A">5</div>
<div class="t b" style="left:684px;top:202.5px;font-size:10.2px;color:#14207A">0</div>
<div class="t b" style="left:684px;top:216px;font-size:10.2px;color:#14207A">1</div>
<div class="t b" style="left:684px;top:241px;font-size:10.2px;color:#14207A">9</div>
<div class="t b" style="left:684px;top:253.5px;font-size:10.2px;color:#14207A">5</div>
<div class="a" style="left:793px;top:118px;width:17px;height:163px;background:#F3F3EF"></div>
<div class="a" style="left:794px;top:121px;width:15px;height:16px;background:linear-gradient(#DCE7FE,#BBCFF9);border:1px solid #B8CCF8;border-radius:2px"></div>
<svg style="left:797px;top:126px" width="9" height="6"><path d="M1 4.5L4.5 1L8 4.5" stroke="#4D6185" stroke-width="1.6" fill="none"/></svg>
<div class="a" style="left:794px;top:138px;width:15px;height:22px;background:linear-gradient(90deg,#CCDAFC,#BCCEFA);border:1px solid #B8CCF8;border-radius:2px"></div>
<div class="a" style="left:794px;top:264px;width:15px;height:16px;background:linear-gradient(#DCE7FE,#BBCFF9);border:1px solid #B8CCF8;border-radius:2px"></div>
<svg style="left:797px;top:270px" width="9" height="6"><path d="M1 1L4.5 4.5L8 1" stroke="#4D6185" stroke-width="1.6" fill="none"/></svg>
<div class="a" style="left:227px;top:280px;width:583px;height:1px;background:#A8A69C"></div>
<div class="a" style="left:227px;top:281px;width:583px;height:3px;background:#F4F3EE"></div>
<div class="a" style="left:227px;top:284px;width:582px;height:22px;background:linear-gradient(#EFEDE2,#E8E5D5);border:1px solid #D8D4C4;border-bottom:2px solid #BDB9A6"></div>
<div class="a" style="left:174px;top:132px;width:513px;height:415px;background:#0B28A6;border-radius:7px 7px 0 0"></div>
<div class="a" style="left:174px;top:132px;width:513px;height:26px;border-radius:7px 7px 0 0;background:linear-gradient(#3A80F0 0,#4A98FC 1px,#2476F4 3px,#0C5CE8 6px,#0A56E2 13px,#0A58E6 19px,#0850D8 23px,#0A44C0 26px)"></div>
<div class="a" style="left:177px;top:158px;width:507px;height:386px;background:#ECE9D8"></div>
<div class="a" style="left:177px;top:158px;width:507px;height:1px;background:#F6F4EC"></div>
<svg style="left:181px;top:139px" width="14" height="16" viewBox="0 0 14 16"><path d="M0.5 11H13L12 15.2H1.5Z" fill="#E4A868" stroke="#B87838" stroke-width="0.7"/><rect x="1" y="2.8" width="12" height="8.6" fill="#FAFAF6" stroke="#D0C8C0" stroke-width="0.6"/><path d="M4 3.5V11M7 3.5V11M10 3.5V11M1.5 6.2H12.5M1.5 8.8H12.5" stroke="#E4E0DC" stroke-width="0.6"/><path d="M1 0.6H13V3.2H1Z" fill="#30403C"/><path d="M1.5 1H5V3H1.5Z" fill="#6CB898"/><path d="M9 1H12.5V3H9Z" fill="#D8D4BC"/></svg>
<div class="t b" style="left:196px;top:142px;font-size:11.7px;color:#fff;text-shadow:1px 1px 0 #0A3CA8">Synchronization Manager</div>
<div class="a" style="left:618px;top:136px;width:20px;height:20px;border:1px solid #FFFFFF;border-radius:3px;background:linear-gradient(135deg,#6A9BF8 0%,#3C7BF0 40%,#1A5EE6 100%)">
<div class="a" style="left:2px;top:13px;width:9px;height:3px;background:#fff"></div>
</div>
<div class="a" style="left:640px;top:136px;width:20px;height:20px;border:1px solid #FFFFFF;border-radius:3px;background:linear-gradient(135deg,#6A9BF8 0%,#3C7BF0 40%,#1A5EE6 100%)">
<div class="a" style="left:2px;top:2px;width:14px;height:15px;border:2px solid #fff;border-top-width:3px"></div>
</div>
<div class="a" style="left:662px;top:136px;width:20px;height:20px;border:1px solid #FFFFFF;border-radius:3px;background:linear-gradient(135deg,#F09A7A 0%,#E0603A 45%,#C8401E 100%)">
<svg style="left:0;top:0" width="18" height="18"><path d="M2.5 3L15.5 16M15.5 3L2.5 16" stroke="#fff" stroke-width="2.8"/></svg>
</div>
<div class="a" style="left:184px;top:165px;width:493px;height:21px;background:linear-gradient(#F7F6F0,#ECE9D8);border:1px solid #D2CEBC;border-radius:2px"></div>
<div class="a" style="left:188px;top:170px;width:2px;height:13px;background:repeating-linear-gradient(#B8B6AC 0 1px,transparent 1px 3px)"></div>
<div class="a" style="left:193px;top:167px;width:1px;height:18px;background:#D8D4C4"></div>
<div class="t b" style="left:197px;top:171px;font-size:10.2px">Tasks In Queue</div>
<div class="a" style="left:184px;top:187px;width:493px;height:116px;background:#fff;border:1px solid #A0A49C"></div>
<div class="a" style="left:185px;top:188px;width:491px;height:17px;background:linear-gradient(#F5F4EC,#EBEADB);border-bottom:2px solid #D6D2C2"></div>
<div class="a" style="left:409px;top:191px;width:1px;height:12px;background:#C8C4B4"></div>
<div class="a" style="left:560px;top:191px;width:1px;height:12px;background:#C8C4B4"></div>
<div class="t " style="left:191.5px;top:192px;font-size:9.4px">Resource</div>
<div class="t " style="left:415px;top:192px;font-size:9.4px">Status</div>
<div class="a" style="left:200px;top:206px;width:360px;height:13px;background:#E8F1EC"></div>
<div class="a" style="left:200px;top:206px;width:169px;height:13px;background:#316AC5"></div>
<div class="t " style="left:201px;top:206.5px;font-size:9.8px;color:#fff">Software Problems and Useful Utilities</div>
<div class="t " style="left:414px;top:206.5px;font-size:9.8px">Extracting topics...</div>
<svg style="left:189px;top:207.5px" width="11" height="11" viewBox="0 0 11 11"><path d="M2 5.2Q2.5 1.5 6 1.8Q8.6 2.2 9.3 4.8" stroke="#8A7C74" stroke-width="1.8" fill="none"/><path d="M3.6 0.6L1.6 2.8L4.6 3.6Z" fill="#6E6460"/><path d="M9 5.8Q8.5 9.5 5 9.2Q2.4 8.8 1.7 6.2" stroke="#2E9A6A" stroke-width="2.2" fill="none"/><path d="M2.4 4.6Q4 6 6.5 6.2" stroke="#48B888" stroke-width="1.4" fill="none"/></svg>
<div class="t " style="left:201px;top:219.3px;font-size:9.8px">Others</div>
<div class="t " style="left:414px;top:219.3px;font-size:9.8px">Pending...</div>
<svg style="left:189px;top:220.3px" width="11" height="11" viewBox="0 0 11 11"><circle cx="5.5" cy="5.5" r="4.6" fill="#FBFAFE" stroke="#9486C4" stroke-width="1.1"/><path d="M5.5 5.5L4.4 2.6A3 3 0 0 1 8.4 5.2Z" fill="#7C70C0"/><path d="M2.6 6.5Q4 8.2 6.5 8.2" stroke="#C8C0E8" stroke-width="0.8" fill="none"/></svg>
<div class="a" style="left:200px;top:232px;width:360px;height:13px;background:#E8F1EC"></div>
<div class="t " style="left:201px;top:232.1px;font-size:9.8px">Hardware</div>
<div class="t " style="left:414px;top:232.1px;font-size:9.8px">Pending...</div>
<svg style="left:189px;top:233.1px" width="11" height="11" viewBox="0 0 11 11"><circle cx="5.5" cy="5.5" r="4.6" fill="#FBFAFE" stroke="#9486C4" stroke-width="1.1"/><path d="M5.5 5.5L4.4 2.6A3 3 0 0 1 8.4 5.2Z" fill="#7C70C0"/><path d="M2.6 6.5Q4 8.2 6.5 8.2" stroke="#C8C0E8" stroke-width="0.8" fill="none"/></svg>
<div class="t " style="left:201px;top:244.9px;font-size:9.8px">About Life</div>
<div class="t " style="left:414px;top:244.9px;font-size:9.8px">Pending...</div>
<svg style="left:189px;top:245.9px" width="11" height="11" viewBox="0 0 11 11"><circle cx="5.5" cy="5.5" r="4.6" fill="#FBFAFE" stroke="#9486C4" stroke-width="1.1"/><path d="M5.5 5.5L4.4 2.6A3 3 0 0 1 8.4 5.2Z" fill="#7C70C0"/><path d="M2.6 6.5Q4 8.2 6.5 8.2" stroke="#C8C0E8" stroke-width="0.8" fill="none"/></svg>
<div class="a" style="left:200px;top:257px;width:360px;height:13px;background:#E8F1EC"></div>
<div class="t " style="left:201px;top:257.7px;font-size:9.8px">Shareware and Business</div>
<div class="t " style="left:414px;top:257.7px;font-size:9.8px">Pending...</div>
<svg style="left:189px;top:258.7px" width="11" height="11" viewBox="0 0 11 11"><circle cx="5.5" cy="5.5" r="4.6" fill="#FBFAFE" stroke="#9486C4" stroke-width="1.1"/><path d="M5.5 5.5L4.4 2.6A3 3 0 0 1 8.4 5.2Z" fill="#7C70C0"/><path d="M2.6 6.5Q4 8.2 6.5 8.2" stroke="#C8C0E8" stroke-width="0.8" fill="none"/></svg>
<div class="a" style="left:184px;top:305px;width:494px;height:22px;background:linear-gradient(#F7F6F0,#ECE9D8);border:1px solid #D2CEBC;border-radius:2px"></div>
<div class="a" style="left:188px;top:309px;width:2px;height:14px;background:repeating-linear-gradient(#B8B6AC 0 1px,transparent 1px 3px)"></div>
<div class="a" style="left:193px;top:306px;width:1px;height:20px;background:#D8D4C4"></div>
<div class="t b" style="left:197.5px;top:311px;font-size:10.2px">Selected Task</div>
<div class="a" style="left:184px;top:327px;width:494px;height:171px;background:#ECE9D8;border:1px solid #D8D4C4;border-top:none"></div>
<div class="a" style="left:198px;top:339px;width:467px;height:56px;border:1px solid #D0D0BF;border-radius:4px"></div>
<div class="t" style="left:201px;top:333px;padding:0 2px;background:#ECE9D8;color:#3A64C4;font-size:9.6px">Synchronization stage</div>
<div class="t b" style="left:220.5px;top:349.5px;font-size:10.3px">Extracting topics...</div>
<div class="a" style="left:219px;top:367px;width:424px;height:16px;background:#fff;border:1px solid #6E6E64;border-radius:3px"></div>
<svg style="left:0;top:369.5px" width="700" height="12"><defs><linearGradient id="pg" x1="0" y1="0" x2="0" y2="1"><stop offset="0" stop-color="#A8EEA8"/><stop offset="0.25" stop-color="#44D04C"/><stop offset="0.6" stop-color="#2CC43A"/><stop offset="1" stop-color="#88E48A"/></linearGradient></defs><rect x="222" y="0" width="4.3" height="11" fill="url(#pg)"/><rect x="228" y="0" width="4.3" height="11" fill="url(#pg)"/><rect x="234" y="0" width="4.3" height="11" fill="url(#pg)"/><rect x="240" y="0" width="4.3" height="11" fill="url(#pg)"/><rect x="246" y="0" width="4.3" height="11" fill="url(#pg)"/><rect x="252" y="0" width="4.3" height="11" fill="url(#pg)"/><rect x="258" y="0" width="4.3" height="11" fill="url(#pg)"/><rect x="264" y="0" width="4.3" height="11" fill="url(#pg)"/><rect x="270" y="0" width="4.3" height="11" fill="url(#pg)"/><rect x="276" y="0" width="4.3" height="11" fill="url(#pg)"/><rect x="282" y="0" width="4.3" height="11" fill="url(#pg)"/><rect x="288" y="0" width="4.3" height="11" fill="url(#pg)"/><rect x="294" y="0" width="4.3" height="11" fill="url(#pg)"/><rect x="300" y="0" width="4.3" height="11" fill="url(#pg)"/><rect x="306" y="0" width="4.3" height="11" fill="url(#pg)"/><rect x="312" y="0" width="4.3" height="11" fill="url(#pg)"/><rect x="318" y="0" width="4.3" height="11" fill="url(#pg)"/><rect x="324" y="0" width="4.3" height="11" fill="url(#pg)"/><rect x="330" y="0" width="4.3" height="11" fill="url(#pg)"/><rect x="336" y="0" width="4.3" height="11" fill="url(#pg)"/><rect x="342" y="0" width="4.3" height="11" fill="url(#pg)"/><rect x="348" y="0" width="4.3" height="11" fill="url(#pg)"/><rect x="354" y="0" width="4.3" height="11" fill="url(#pg)"/><rect x="360" y="0" width="4.3" height="11" fill="url(#pg)"/><rect x="366" y="0" width="4.3" height="11" fill="url(#pg)"/><rect x="372" y="0" width="4.3" height="11" fill="url(#pg)"/><rect x="378" y="0" width="4.3" height="11" fill="url(#pg)"/><rect x="384" y="0" width="4.3" height="11" fill="url(#pg)"/><rect x="390" y="0" width="4.3" height="11" fill="url(#pg)"/><rect x="396" y="0" width="4.3" height="11" fill="url(#pg)"/><rect x="402" y="0" width="4.3" height="11" fill="url(#pg)"/><rect x="408" y="0" width="4.3" height="11" fill="url(#pg)"/><rect x="414" y="0" width="4.3" height="11" fill="url(#pg)"/><rect x="420" y="0" width="4.3" height="11" fill="url(#pg)"/><rect x="426" y="0" width="4.3" height="11" fill="url(#pg)"/><rect x="432" y="0" width="4.3" height="11" fill="url(#pg)"/><rect x="438" y="0" width="4.3" height="11" fill="url(#pg)"/><rect x="444" y="0" width="4.3" height="11" fill="url(#pg)"/><rect x="450" y="0" width="4.3" height="11" fill="url(#pg)"/><rect x="456" y="0" width="4.3" height="11" fill="url(#pg)"/><rect x="462" y="0" width="4.3" height="11" fill="url(#pg)"/><rect x="468" y="0" width="4.3" height="11" fill="url(#pg)"/><rect x="474" y="0" width="4.3" height="11" fill="url(#pg)"/></svg>
<div class="a" style="left:198px;top:407px;width:467px;height:78px;background:#fff;border:1px solid #A6B2C0"></div>
<div class="t " style="left:202px;top:410.0px;font-size:9.75px">01.08.2007 16:11:16: Software Problems and Useful Utilities - synchronization started...</div>
<div class="t " style="left:202px;top:421.8px;font-size:9.75px">01.08.2007 16:11:19: Others - synchronizing...</div>
<div class="t " style="left:202px;top:433.6px;font-size:9.75px">01.08.2007 16:11:21: Hardware - synchronizing...</div>
<div class="t " style="left:202px;top:445.4px;font-size:9.75px">01.08.2007 16:11:24: About Life - synchronizing...</div>
<div class="t " style="left:202px;top:457.2px;font-size:9.75px">01.08.2007 16:11:25: Shareware and Business - synchronizing...</div>
<div class="a" style="left:649px;top:408px;width:15px;height:76px;background:#F4F4F0"></div>
<div class="a" style="left:650px;top:409px;width:13px;height:15px;background:linear-gradient(#DCE7FE,#BBCFF9);border:1px solid #B8CCF8;border-radius:2px"></div>
<svg style="left:652px;top:414px" width="9" height="6"><path d="M1 4.5L4.5 1L8 4.5" stroke="#4D6185" stroke-width="1.6" fill="none"/></svg>
<div class="a" style="left:650px;top:455px;width:13px;height:13px;background:linear-gradient(90deg,#CCDAFC,#BCCEFA);border:1px solid #B8CCF8;border-radius:2px"></div>
<div class="a" style="left:650px;top:469px;width:13px;height:14px;background:linear-gradient(#DCE7FE,#BBCFF9);border:1px solid #B8CCF8;border-radius:2px"></div>
<svg style="left:652px;top:474px" width="9" height="6"><path d="M1 1L4.5 4.5L8 1" stroke="#4D6185" stroke-width="1.6" fill="none"/></svg>
<div class="a" style="left:602px;top:509px;width:75px;height:24px;background:linear-gradient(#FFFFFF,#F4F3EE 60%,#E8E6DC);border:1px solid #6A6A5E;border-radius:3px"></div>
<div class="t " style="left:619px;top:515px;font-size:9.8px">Minimize</div>
</body></html>
